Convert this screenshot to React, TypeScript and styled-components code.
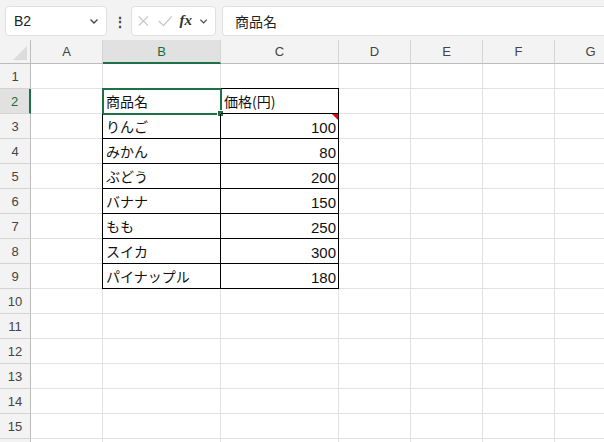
import React from 'react';
import styled, { createGlobalStyle } from 'styled-components';

const GlobalStyle = createGlobalStyle`
  body { margin: 0; background: #fff; font-family: "Noto Sans CJK JP", "Liberation Sans", sans-serif; }
`;

const cols = ['A', 'B', 'C', 'D', 'E', 'F', 'G'];
const widths = [72, 118, 118, 72, 72, 72, 72];
const data: [string, string][] = [
  ['商品名', '価格(円)'],
  ['りんご', '100'],
  ['みかん', '80'],
  ['ぶどう', '200'],
  ['バナナ', '150'],
  ['もも', '250'],
  ['スイカ', '300'],
  ['パイナップル', '180'],
];

const Page = styled.div`
  width: 604px;
  height: 442px;
  overflow: hidden;
  background: #f3f3f3;
`;

const Toolbar = styled.div`
  height: 39px;
  display: flex;
  align-items: center;
  padding: 1px 0 0 5px;
  gap: 6px;
`;

const Box = styled.div<{ $w?: number }>`
  height: 30px;
  box-sizing: border-box;
  ${(p) => (p.$w ? `width: ${p.$w}px;` : 'flex: 1;')}
  background: #fff;
  border: 1px solid #e0e0e0;
  border-radius: 4px;
  display: flex;
  align-items: center;
  padding: 0 6px 0 8px;
  font-size: 14px;
  color: #222;
`;

const NameText = styled.span`
  flex: 1;
  font-family: "Liberation Sans", sans-serif;
  font-size: 14px;
`;

const Dots = styled.div`
  width: 12px;
  text-align: center;
  color: #444;
  font-weight: bold;
  font-size: 14px;
`;

const Fx = styled.span`
  font-family: "Liberation Serif", serif;
  font-style: italic;
  font-weight: bold;
  font-size: 15px;
  color: #333;
`;

const Grid = styled.div`
  display: grid;
  grid-template-columns: 31px ${widths.map((w) => w + 'px').join(' ')};
  grid-auto-rows: 25px;
  grid-template-rows: 24px;
  background: #fff;
`;

const ColHead = styled.div<{ $sel?: boolean }>`
  box-sizing: border-box;
  display: flex;
  align-items: center;
  justify-content: center;
  font-family: "Liberation Sans", sans-serif;
  font-size: 13px;
  color: ${(p) => (p.$sel ? '#1e6b3a' : '#444')};
  background: ${(p) => (p.$sel ? '#e1e1e1' : '#f3f3f3')};
  border-right: 1px solid #d4d4d4;
  border-bottom: ${(p) => (p.$sel ? '2px solid #1e7145' : '1px solid #bdbdbd')};
`;

const Corner = styled.div`
  background: #f3f3f3;
  border-right: 1px solid #bdbdbd;
  border-bottom: 1px solid #bdbdbd;
  position: relative;
  &::after {
    content: '';
    position: absolute;
    right: 3px;
    bottom: 3px;
    border-left: 14px solid transparent;
    border-bottom: 14px solid #dcdcdc;
  }
`;

const RowHead = styled.div<{ $sel?: boolean }>`
  box-sizing: border-box;
  display: flex;
  align-items: center;
  justify-content: center;
  font-family: "Liberation Sans", sans-serif;
  font-size: 13px;
  color: ${(p) => (p.$sel ? '#1e6b3a' : '#444')};
  background: ${(p) => (p.$sel ? '#e1e1e1' : '#f3f3f3')};
  border-bottom: 1px solid #d4d4d4;
  border-right: ${(p) => (p.$sel ? '2px solid #1e7145' : '1px solid #bdbdbd')};
`;

const Cell = styled.div<{ $boxed?: boolean; $right?: boolean; $top?: boolean; $left?: boolean }>`
  box-sizing: border-box;
  position: relative;
  display: flex;
  align-items: flex-end;
  justify-content: ${(p) => (p.$right ? 'flex-end' : 'flex-start')};
  padding: 0 2px 2px 3px;
  font-size: 14px;
  color: #111;
  border-right: 1px solid ${(p) => (p.$boxed ? '#000' : '#e2e2e2')};
  border-bottom: 1px solid ${(p) => (p.$boxed ? '#000' : '#e2e2e2')};
  ${(p) => (p.$top ? 'border-top: 1px solid #000; margin-top: -1px;' : '')}
  ${(p) => (p.$left ? 'border-left: 1px solid #000; margin-left: -1px;' : '')}
`;

const NumText = styled.span`
  font-family: "Liberation Sans", sans-serif;
  font-size: 15px;
`;

const Selection = styled.div`
  position: absolute;
  inset: -1px -2px -2px -1px;
  border: 2px solid #1e7145;
  pointer-events: none;
  &::after {
    content: '';
    position: absolute;
    right: -4px;
    bottom: -4px;
    width: 5px;
    height: 5px;
    background: #1e7145;
    border: 1px solid #fff;
  }
`;

const Comment = styled.div`
  position: absolute;
  top: 0;
  right: 0;
  border-left: 6px solid transparent;
  border-top: 6px solid #e00;
`;

const Chevron = () => (
  <svg width="12" height="12" viewBox="0 0 12 12">
    <path d="M2.5 4.5 L6 8 L9.5 4.5" fill="none" stroke="#444" strokeWidth="1.3" />
  </svg>
);

export default function App() {
  return (
    <Page>
      <GlobalStyle />
      <Toolbar>
        <Box $w={102}>
          <NameText>B2</NameText>
          <Chevron />
        </Box>
        <Dots>⋮</Dots>
        <Box $w={85} style={{ paddingLeft: 4, gap: 6 }}>
          <svg width="16" height="16" viewBox="0 0 16 16">
            <path d="M3 3 L13 13 M13 3 L3 13" stroke="#c4c4c4" strokeWidth="1.3" />
          </svg>
          <svg width="18" height="16" viewBox="0 0 18 16">
            <path d="M2 8 L7 13 L16 3" fill="none" stroke="#c4c4c4" strokeWidth="1.3" />
          </svg>
          <Fx>fx</Fx>
          <Chevron />
        </Box>
        <Box style={{ borderRight: 'none', borderRadius: '4px 0 0 4px', paddingLeft: 12 }}>商品名</Box>
      </Toolbar>
      <Grid>
        <Corner />
        {cols.map((c) => (
          <ColHead key={c} $sel={c === 'B'}>{c}</ColHead>
        ))}
        {Array.from({ length: 16 }, (_, r) => {
          const row = r + 1;
          const d = row >= 2 && row <= 9 ? data[row - 2] : null;
          return (
            <React.Fragment key={row}>
              <RowHead $sel={row === 2}>{row}</RowHead>
              {cols.map((c) => {
                const inTable = !!d && (c === 'B' || c === 'C');
                const text = inTable ? (c === 'B' ? d![0] : d![1]) : '';
                const numeric = inTable && c === 'C' && row > 2;
                return (
                  <Cell
                    key={c}
                    $boxed={inTable}
                    $right={numeric}
                    $top={inTable && row === 2}
                    $left={inTable && c === 'B'}
                  >
                    {numeric ? <NumText>{text}</NumText> : text}
                    {row === 2 && c === 'B' && <Selection />}
                    {row === 3 && c === 'C' && <Comment />}
                  </Cell>
                );
              })}
            </React.Fragment>
          );
        })}
      </Grid>
    </Page>
  );
}
